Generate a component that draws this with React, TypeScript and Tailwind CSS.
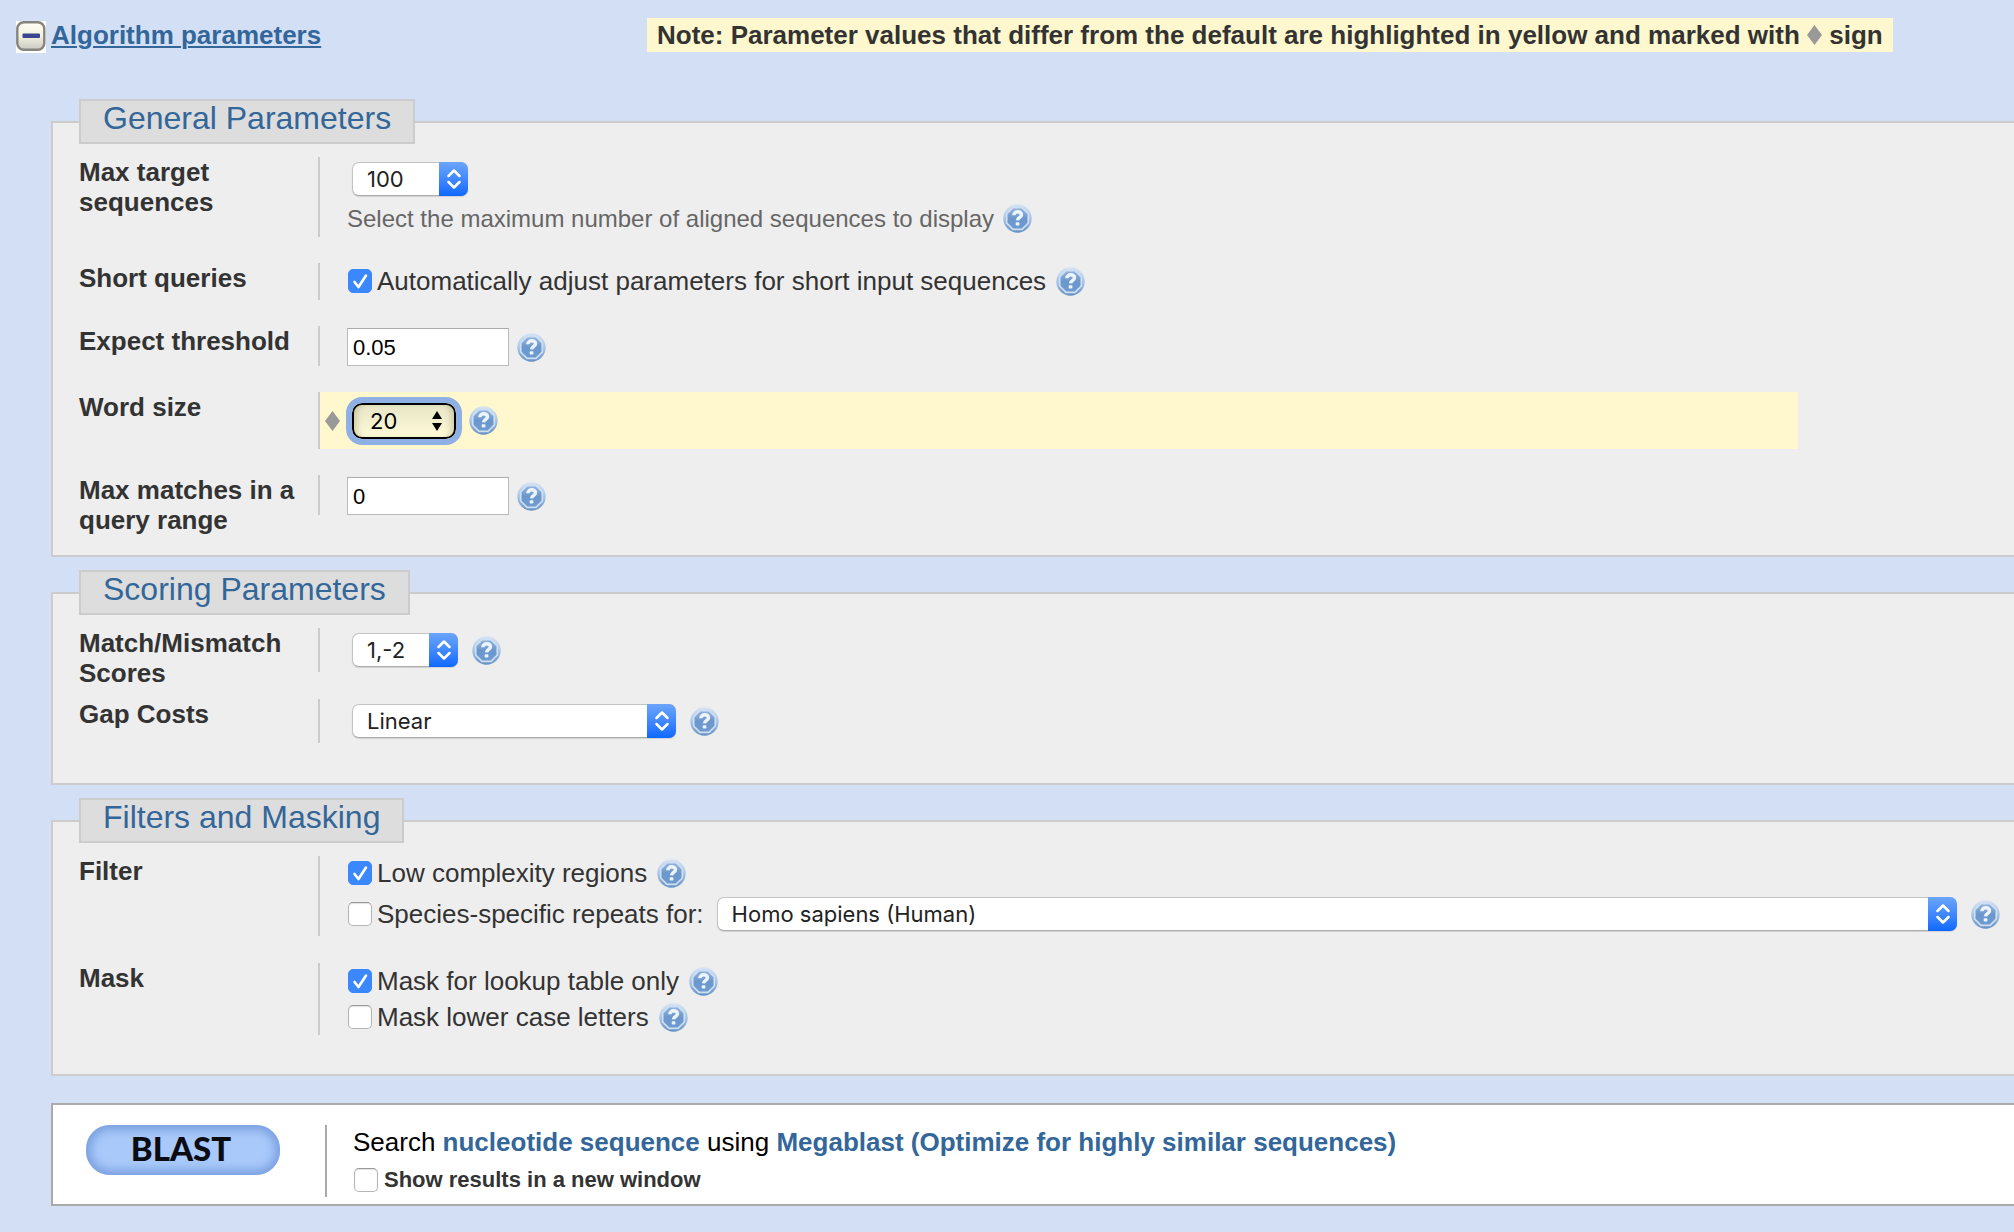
import { useId } from "react";
import type { InputHTMLAttributes, ReactNode } from "react";
import { clsx } from "clsx";

function HelpIcon({ topic }: { topic: string }) {
  const id = useId();
  return (
    <button type="button" aria-label={`Help: ${topic}`} className="block h-[29px] w-[29px] shrink-0 cursor-pointer">
      <svg viewBox="0 0 29 29" className="block h-full w-full">
        <defs>
          <linearGradient id={`${id}-ring`} x1="0" y1="0" x2="0" y2="1">
            <stop offset="0" stopColor="#d6e4f5" />
            <stop offset="0.5" stopColor="#a9c5e6" />
            <stop offset="1" stopColor="#6490c4" />
          </linearGradient>
          <linearGradient id={`${id}-disc`} x1="0" y1="0" x2="0" y2="1">
            <stop offset="0" stopColor="#94b5dd" />
            <stop offset="0.5" stopColor="#6b97cc" />
            <stop offset="1" stopColor="#6d9bd0" />
          </linearGradient>
        </defs>
        <circle cx="14.5" cy="14.5" r="14.2" fill={`url(#${id}-ring)`} />
        <path
          d="M10 3.7H19L25.3 10V19L19 25.3H10L3.7 19V10Z"
          fill={`url(#${id}-disc)`}
          stroke="#cfdff2"
          strokeWidth="1.7"
          strokeLinejoin="round"
        />
        <path d="M10.8 11.3c0-4.6 7.7-4.6 7.7-0.5 0 2.6-3.7 2.6-4 5.6" fill="none" stroke="#eef4fb" strokeWidth="3.4" />
        <rect x="12.7" y="18.3" width="3.7" height="3.2" rx="0.8" fill="#eef4fb" />
      </svg>
    </button>
  );
}

function Diamond() {
  return (
    <svg viewBox="0 0 15 20" className="block h-5 w-[15px] shrink-0" aria-hidden="true">
      <path d="M7.5 0L15 10L7.5 20L0 10Z" fill="#999999" />
    </svg>
  );
}

interface SelectProps {
  label: string;
  options: string[];
  value: string;
  className?: string;
  changed?: boolean;
}

function Select({ label, options, value, className, changed }: SelectProps) {
  return (
    <div className={clsx("relative", className)}>
      <select
        aria-label={label}
        defaultValue={value}
        className={clsx(
          "block w-full appearance-none text-[22px] leading-[30px] font-['Inter','Liberation_Sans',sans-serif]",
          changed
            ? "h-9 rounded-[10px] border-2 border-black bg-linear-to-b from-[#e8e5c6] to-[#fffbd8] pl-4 text-black shadow-[inset_7px_0_6px_-4px_rgba(120,115,70,0.3),inset_-7px_0_6px_-4px_rgba(120,115,70,0.3)] outline-[6px] outline-[#8fb0e4]"
            : "h-[34px] rounded-[7px] border border-[#c4c4c4] border-b-[#acacac] bg-white pl-3.5 text-[#222] shadow-[0_1px_1px_rgba(0,0,0,0.12)]"
        )}
      >
        {options.map((option) => (
          <option key={option}>{option}</option>
        ))}
      </select>
      {changed ? (
        <svg viewBox="0 0 10 20" className="pointer-events-none absolute top-2 right-3.5 h-5 w-2.5">
          <path d="M5 0L10 8H0ZM0 12H10L5 20Z" fill="#000" />
        </svg>
      ) : (
        <span className="pointer-events-none absolute inset-y-0 right-0 flex w-[29px] items-center justify-center rounded-r-[7px] bg-linear-to-b from-[#6ba5fb] to-[#0a68fe]">
          <svg viewBox="0 0 14 20" className="h-5 w-3.5">
            <path
              d="M1.5 7L7 1.5L12.5 7M1.5 13L7 18.5L12.5 13"
              fill="none"
              stroke="#fff"
              strokeWidth="2.5"
              strokeLinecap="round"
              strokeLinejoin="round"
            />
          </svg>
        </span>
      )}
    </div>
  );
}

function Checkbox(props: InputHTMLAttributes<HTMLInputElement>) {
  return (
    <span className="relative ml-px block h-6 w-6 shrink-0">
      <input
        type="checkbox"
        className="peer block h-6 w-6 appearance-none rounded-[5px] border border-[#b4b4b4] border-t-[#999] bg-white shadow-[inset_0_1px_1px_rgba(0,0,0,0.12)] checked:border-[#3b88fd] checked:bg-[#3b88fd] checked:shadow-none"
        {...props}
      />
      <svg viewBox="0 0 24 24" className="pointer-events-none absolute inset-0 hidden h-6 w-6 peer-checked:block">
        <path
          d="M6.5 13L10.5 18L18 6.5"
          fill="none"
          stroke="#fff"
          strokeWidth="2.6"
          strokeLinecap="round"
          strokeLinejoin="round"
        />
      </svg>
    </span>
  );
}

function CheckLine({ label, checked, children }: { label: string; checked?: boolean; children: ReactNode }) {
  return (
    <div className="flex min-h-8 items-center">
      <label className="flex shrink-0 items-center gap-[5px]">
        <Checkbox defaultChecked={checked} />
        {label}
      </label>
      {children}
    </div>
  );
}

function NumberField({ label, value }: { label: string; value: string }) {
  return (
    <div className="flex items-center gap-2 pt-0.5">
      <input
        type="text"
        aria-label={label}
        defaultValue={value}
        className="block h-[38px] w-[162px] border border-[#bbb] border-t-[#aaa] bg-white pt-0.5 pl-[5px] text-[22px] text-black"
      />
      <HelpIcon topic={label} />
    </div>
  );
}

function Section({ title, className, children }: { title: string; className: string; children: ReactNode }) {
  return (
    <fieldset className={clsx("mb-[13px] min-w-0 border-2 border-r-0 border-[#ccc] bg-[#eee] pl-[26px]", className)}>
      <legend className="border-2 border-[#ccc] bg-[#ddd] px-[22px] pb-[7px] text-[32px] leading-[34px] text-[#336699]">
        {title}
      </legend>
      <div className="flex flex-col pt-[13px]">{children}</div>
    </fieldset>
  );
}

function Row({ label, className, children }: { label: string; className?: string; children: ReactNode }) {
  return (
    <div className="flex items-start">
      <div className="w-[239px] shrink-0 pr-4 font-bold">{label}</div>
      <div className={clsx("min-w-0 flex-1 border-l-2 border-[#ccc]", className ?? "pl-[27px]")}>{children}</div>
    </div>
  );
}

export default function App() {
  return (
    <div className="min-h-screen overflow-x-hidden bg-[#d3dff5] font-['Liberation_Sans',Arial,sans-serif] text-[26px] leading-[30px] text-[#333]">
      <header className="flex items-start pt-[18px] pl-4">
        <a href="#parameters" className="flex h-[35px] w-[631px] shrink-0 gap-[5px] font-bold text-[#336699]">
          <svg viewBox="0 0 30 32" className="h-8 w-[30px] self-end" aria-hidden="true">
            <defs>
              <linearGradient id="toggle-face" x1="0" y1="0" x2="0" y2="1">
                <stop offset="0" stopColor="#fdfdf6" />
                <stop offset="0.5" stopColor="#f3f2df" />
                <stop offset="1" stopColor="#c9c9c4" />
              </linearGradient>
            </defs>
            <rect width="30" height="32" fill="#fff" />
            <rect x="1.3" y="1.3" width="27" height="27.4" rx="6.5" fill="url(#toggle-face)" stroke="#85857f" strokeWidth="2.4" />
            <rect x="6.5" y="12.6" width="17.5" height="4.4" rx="1" fill="#3b4590" />
          </svg>
          <span className="leading-[34px] underline decoration-2 underline-offset-2">Algorithm parameters</span>
        </a>
        <p className="flex items-center bg-[#fff8ce] px-2.5 leading-[34px] font-bold whitespace-pre">
          Note: Parameter values that differ from the default are highlighted in yellow and marked with <Diamond /> sign
        </p>
      </header>

      <main id="parameters" className="pt-[46px] pl-[51px]">
        <Section title="General Parameters" className="pb-5">
          <div className="flex flex-col gap-[26px]">
            <Row label="Max target sequences">
              <div className="pt-[5px] pb-1">
                <Select label="Max target sequences" options={["10", "50", "100", "250", "500", "1000", "5000"]} value="100" className="ml-[5px] w-[116px]" />
                <div className="mt-2 flex items-center gap-[9px] text-2xl leading-[29px] text-[#666]">
                  Select the maximum number of aligned sequences to display
                  <HelpIcon topic="Max target sequences" />
                </div>
              </div>
            </Row>
            <Row label="Short queries">
              <div className="pt-0.5 pb-[3px]">
                <CheckLine label="Automatically adjust parameters for short input sequences" checked>
                  <div className="ml-2.5">
                    <HelpIcon topic="Short queries" />
                  </div>
                </CheckLine>
              </div>
            </Row>
            <Row label="Expect threshold">
              <NumberField label="Expect threshold" value="0.05" />
            </Row>
            <Row label="Word size" className="mr-54 bg-[#fff8ce] pl-[5px]">
              <div className="flex h-[57px] items-center">
                <Diamond />
                <Select label="Word size" options={["16", "20", "24", "28", "32", "48", "64"]} value="20" changed className="mr-[13px] ml-3 w-[104px]" />
                <HelpIcon topic="Word size" />
              </div>
            </Row>
            <Row label="Max matches in a query range">
              <NumberField label="Max matches in a query range" value="0" />
            </Row>
          </div>
        </Section>

        <Section title="Scoring Parameters" className="pb-10">
          <div className="flex flex-col gap-[11px]">
            <Row label="Match/Mismatch Scores">
              <div className="flex items-center gap-3.5 py-[5px] pl-[5px]">
                <Select label="Match/Mismatch Scores" options={["1,-2", "1,-3", "1,-4", "2,-3", "4,-5", "1,-1"]} value="1,-2" className="w-[106px]" />
                <HelpIcon topic="Match/Mismatch Scores" />
              </div>
            </Row>
            <Row label="Gap Costs">
              <div className="flex items-center gap-3.5 py-[5px] pl-[5px]">
                <Select label="Gap Costs" options={["Linear", "Existence: 5 Extension: 2"]} value="Linear" className="w-[324px]" />
                <HelpIcon topic="Gap Costs" />
              </div>
            </Row>
          </div>
        </Section>

        <Section title="Filters and Masking" className="pb-[39px]">
          <div className="flex flex-col gap-[27px]">
            <Row label="Filter">
              <div className="flex flex-col gap-2 pt-px pr-3.5 pb-[5px]">
                <CheckLine label="Low complexity regions" checked>
                  <div className="ml-2.5">
                    <HelpIcon topic="Low complexity regions" />
                  </div>
                </CheckLine>
                <CheckLine label="Species-specific repeats for:">
                  <Select label="Species" options={["Homo sapiens (Human)", "Mus musculus (Mouse)"]} value="Homo sapiens (Human)" className="mr-3.5 ml-[13px] flex-1" />
                  <HelpIcon topic="Species-specific repeats" />
                </CheckLine>
              </div>
            </Row>
            <Row label="Mask">
              <div className="flex flex-col gap-1 py-0.5">
                <CheckLine label="Mask for lookup table only" checked>
                  <div className="ml-2.5">
                    <HelpIcon topic="Mask for lookup table only" />
                  </div>
                </CheckLine>
                <CheckLine label="Mask lower case letters">
                  <div className="ml-2.5">
                    <HelpIcon topic="Mask lower case letters" />
                  </div>
                </CheckLine>
              </div>
            </Row>
          </div>
        </Section>

        <div className="mt-[27px] flex items-start border-2 border-r-0 border-[#aaa] bg-white pt-5 pb-[7px] pl-[33px]">
          <button
            type="button"
            className="mr-[45px] h-[50px] w-[194px] shrink-0 rounded-[24px] bg-[#a9c9fa] pr-1 pb-1 font-['Lato','Open_Sans',sans-serif] text-[33px] leading-none font-black text-[#0b0b12] shadow-[inset_0_0_10px_5px_#7ba0e0]"
          >
            BLAST
          </button>
          <div className="flex h-[72px] flex-col gap-[7px] border-l-2 border-[#aaa] pt-0.5 pl-[26px]">
            <p className="text-black">
              Search <b className="text-[#336699]">nucleotide sequence</b> using{" "}
              <b className="text-[#336699]">Megablast (Optimize for highly similar sequences)</b>
            </p>
            <label className="flex h-8 items-center gap-1.5 text-[22px] font-bold">
              <Checkbox />
              Show results in a new window
            </label>
          </div>
        </div>
      </main>
    </div>
  );
}
